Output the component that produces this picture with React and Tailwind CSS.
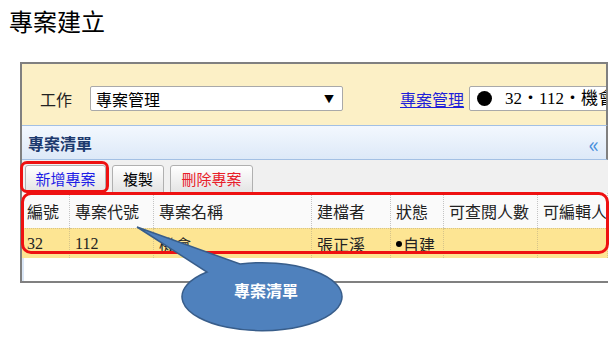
import React from 'react';

const sans = { fontFamily: '"Noto Sans CJK TC", "Noto Sans", sans-serif' };

const columns = [
  { title: '編號', value: '32', serif: true },
  { title: '專案代號', value: '112', serif: true },
  { title: '專案名稱', value: '機會' },
  { title: '建檔者', value: '張正溪' },
  { title: '狀態', value: 'status' },
  { title: '可查閱人數', value: '' },
  { title: '可編輯人', value: '' },
];

const App = () => {
  return (
    <div
      className="relative w-[614px] h-[337px] bg-white overflow-hidden text-[#222]"
      style={sans}
    >
      {/* Page title */}
      <div className="h-[62px] pl-[9px] pt-[5px] text-[24px] leading-[32px] text-black">
        專案建立
      </div>

      {/* Screenshot frame */}
      <div className="ml-[20px] w-[588px] h-[221px] border-t-2 border-l-2 border-b-2 border-[#808080] flex flex-col">
        {/* Work selector */}
        <div className="h-[61px] shrink-0 bg-[#fcf0c6] border-r-2 border-[#808080] overflow-hidden flex items-start pt-[22px] pl-[18px] whitespace-nowrap">
          <span className="h-[25px] flex items-center text-[16px]">工作</span>
          <div className="ml-[18px] w-[253px] h-[25px] shrink-0 bg-white border border-[#a9a9a9] rounded-[2px] flex items-center justify-between pl-[5px] pr-[8px]">
            <span className="text-[16px] text-black">專案管理</span>
            <span className="text-[10px] text-black">▼</span>
          </div>
          <span className="ml-[57px] h-[25px] flex items-center text-[16px] text-[#1f1fd8] underline">專案管理</span>
          <div className="ml-[5px] w-[200px] h-[25px] shrink-0 bg-white border border-[#a9a9a9] rounded-[2px] flex items-center pl-[7px]">
            <span className="w-[15px] h-[15px] rounded-full bg-black shrink-0"></span>
            <span
              className="ml-[13px] text-[17px] text-black"
              style={{ fontFamily: '"Liberation Serif", "Noto Sans CJK TC", serif' }}
            >
              32・112・機會
            </span>
          </div>
        </div>

        {/* List title bar */}
        <div className="h-[35px] shrink-0 border-t border-b border-[#a3c0e4] border-r-2 border-r-[#808080] bg-gradient-to-b from-[#f3f8fe] to-[#dde9f8] flex items-center justify-between pl-[6px] pr-[7px]">
          <span className="text-[16px] font-bold text-[#1d3a6e]">專案清單</span>
          <span className="text-[22px] leading-none text-[#4a8fdc]">«</span>
        </div>

        {/* Toolbar */}
        <div className="h-[33px] shrink-0 bg-[#f0f0f0] flex items-start pt-[5px] pl-[3px] gap-[6px] text-[15px]">
          <button className="h-[28px] w-[81px] border border-[#b0b0b0] rounded-t-[3px] bg-gradient-to-b from-white to-[#e4e4e4] text-[#1f1fe6]">
            新增專案
          </button>
          <button className="h-[28px] w-[52px] border border-[#b0b0b0] rounded-t-[3px] bg-gradient-to-b from-white to-[#e4e4e4] text-black">
            複製
          </button>
          <button className="h-[28px] w-[83px] border border-[#b0b0b0] rounded-t-[3px] bg-gradient-to-b from-white to-[#e4e4e4] text-[#e8202a]">
            刪除專案
          </button>
        </div>

        {/* Table */}
        <div className="grid grid-cols-[48px_84px_158px_79px_53px_94px_1fr] overflow-hidden">
          {columns.map((c, i) => (
            <div
              key={'h' + i}
              className="h-[35px] bg-[#fafafa] border-r border-dotted border-[#c4c4c4] flex items-center pl-[5px] text-[16px] whitespace-nowrap"
            >
              {c.title}
            </div>
          ))}
          {columns.map((c, i) => (
            <div
              key={'d' + i}
              className="h-[30px] bg-[#fde593] border-r border-t border-dotted border-[#d6c48a] flex items-center pl-[5px] text-[16px] whitespace-nowrap"
              style={c.serif ? { fontFamily: '"Liberation Serif", serif' } : undefined}
            >
              {c.value === 'status' ? (
                <>
                  <span className="w-[6px] h-[6px] rounded-full bg-black mr-[1px]"></span>
                  自建
                </>
              ) : (
                c.value
              )}
            </div>
          ))}
        </div>
        <div className="flex-1 bg-white border-l-2 border-[#dbe7f6]"></div>
      </div>

      {/* Red highlights */}
      <div className="absolute left-[20px] top-[161px] w-[89px] h-[32px] border-[3px] border-[#ee1111] rounded-[7px]"></div>
      <div className="absolute left-[21px] top-[192px] w-[588px] h-[62px] border-[3px] border-[#ee1111] rounded-[10px]"></div>

      {/* Callout */}
      <svg className="absolute left-0 top-0 pointer-events-none" width="614" height="337" viewBox="0 0 614 337">
        <path
          d="M 137 227 L 207 272 A 80 34 0 1 0 240 264 Z"
          fill="#4f81bd"
          stroke="#385d8a"
          strokeWidth="1.5"
        />
      </svg>
      <div className="absolute left-[186px] top-[280px] w-[160px] text-center text-[16px] leading-[20px] font-bold text-white">
        專案清單
      </div>
    </div>
  );
};

export default App;
